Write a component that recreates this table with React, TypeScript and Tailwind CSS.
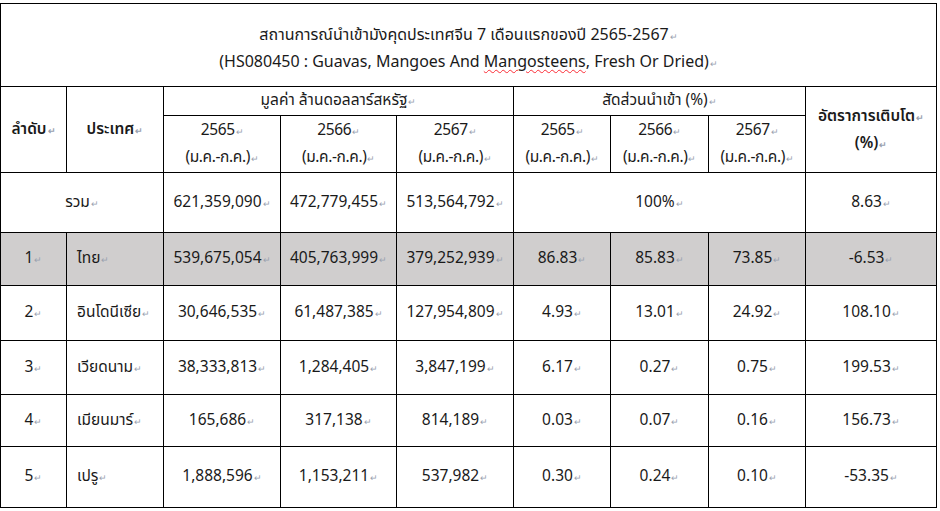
import React from 'react'

type Row = { no: string; name: string; v: string[]; s: string[]; g: string; hl?: boolean }

const rows: Row[] = [
  { no: '1', name: 'ไทย', v: ['539,675,054', '405,763,999', '379,252,939'], s: ['86.83', '85.83', '73.85'], g: '-6.53', hl: true },
  { no: '2', name: 'อินโดนีเซีย', v: ['30,646,535', '61,487,385', '127,954,809'], s: ['4.93', '13.01', '24.92'], g: '108.10' },
  { no: '3', name: 'เวียดนาม', v: ['38,333,813', '1,284,405', '3,847,199'], s: ['6.17', '0.27', '0.75'], g: '199.53' },
  { no: '4', name: 'เมียนมาร์', v: ['165,686', '317,138', '814,189'], s: ['0.03', '0.07', '0.16'], g: '156.73' },
  { no: '5', name: 'เปรู', v: ['1,888,596', '1,153,211', '537,982'], s: ['0.30', '0.24', '0.10'], g: '-53.35' },
]

const heights = ['h-[53px]', 'h-[55px]', 'h-[54px]', 'h-[52px]', 'h-[61px]']

// เครื่องหมายย่อหน้าแบบ Word
function P() {
  return <span className="text-[9px] leading-none text-gray-400 ml-px">↵</span>
}

const cell = 'border border-black p-0 text-center align-middle leading-[20px]'
const years = ['2565', '2566', '2567']

export default function App() {
  return (
    <div
      className="w-[940px] h-[511px] bg-white text-[15.5px] text-[#1a1a1a] overflow-hidden pt-[3px]"
      style={{ fontFamily: '"Noto Sans Thai", "Open Sans", "Noto Sans", sans-serif' }}
    >
      <table className="border-collapse table-fixed w-[936px] border border-black">
        <colgroup>
          <col className="w-[66px]" />
          <col className="w-[97px]" />
          <col className="w-[117px]" />
          <col className="w-[116px]" />
          <col className="w-[117px]" />
          <col className="w-[97px]" />
          <col className="w-[98px]" />
          <col className="w-[97px]" />
          <col className="w-[131px]" />
        </colgroup>
        <tbody>
          <tr className="h-[83px]">
            <td colSpan={9} className={`${cell} text-[16px] pt-[7px]`}>
              <div className="leading-[27px]">สถานการณ์นำเข้ามังคุดประเทศจีน 7 เดือนแรกของปี 2565-2567<P /></div>
              <div className="leading-[27px]">
                (HS080450 : Guavas, Mangoes And{' '}
                <span className="underline decoration-wavy decoration-red-500 decoration-1 underline-offset-2">Mangosteens</span>, Fresh Or Dried)<P />
              </div>
            </td>
          </tr>
          <tr className="h-[29px]">
            <td rowSpan={2} className={`${cell} font-semibold`}>ลำดับ<P /></td>
            <td rowSpan={2} className={`${cell} font-semibold`}>ประเทศ<P /></td>
            <td colSpan={3} className={cell}>มูลค่า ล้านดอลลาร์สหรัฐ<P /></td>
            <td colSpan={3} className={cell}>สัดส่วนนำเข้า (%)<P /></td>
            <td rowSpan={2} className={`${cell} font-semibold`}>
              <div className="leading-[27px]">อัตราการเติบโต<P /></div>
              <div className="leading-[27px]">(%)<P /></div>
            </td>
          </tr>
          <tr className="h-[57px]">
            {[...years, ...years].map((y, i) => (
              <td key={i} className={`${cell} tracking-tight`}>
                <div className="leading-[27px]">{y}<P /></div>
                <div className="leading-[27px]">(ม.ค.-ก.ค.)<P /></div>
              </td>
            ))}
          </tr>
          <tr className="h-[60px]">
            <td colSpan={2} className={cell}>รวม<P /></td>
            <td className={cell}>621,359,090<P /></td>
            <td className={cell}>472,779,455<P /></td>
            <td className={cell}>513,564,792<P /></td>
            <td colSpan={3} className={cell}>100%<P /></td>
            <td className={cell}>8.63<P /></td>
          </tr>
          {rows.map((r, i) => (
            <tr key={r.no} className={`${heights[i]} ${r.hl ? 'bg-[#d0cece]' : ''}`}>
              <td className={cell}>{r.no}<P /></td>
              <td className={`${cell} text-left pl-[10px]`}>{r.name}<P /></td>
              {r.v.map((x, j) => (
                <td key={j} className={cell}>{x}<P /></td>
              ))}
              {r.s.map((x, j) => (
                <td key={j} className={cell}>{x}<P /></td>
              ))}
              <td className={cell}>{r.g}<P /></td>
            </tr>
          ))}
        </tbody>
      </table>
    </div>
  )
}
